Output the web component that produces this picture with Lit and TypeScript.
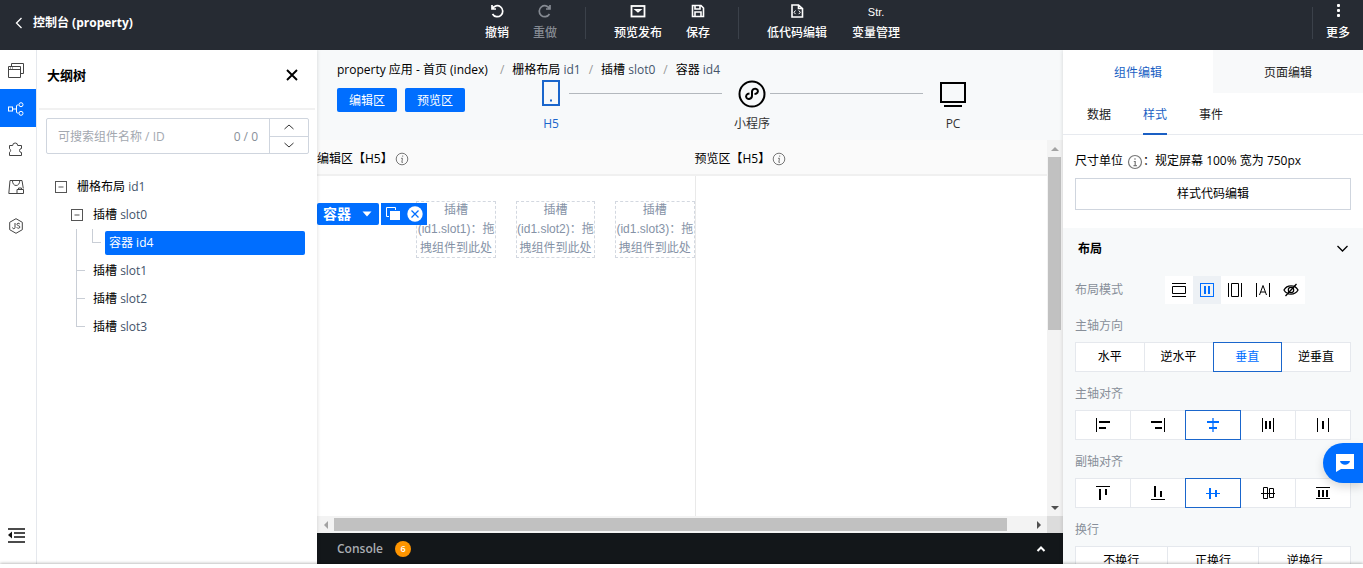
import { LitElement, html, css, svg, nothing } from "lit";
import { customElement, property, state } from "lit/decorators.js";
import { classMap } from "lit/directives/class-map.js";

const icons: Record<string, unknown> = {
  back: svg`<path d="M10.500 3 5.500 8l5 5" stroke-width="1.300" />`,
  undo: svg`<path d="M3 2v4h4M3.300 5.800A5.500 5.500 0 1 1 3.500 11" stroke-width="1.700" />`,
  redo: svg`<path d="M13 2v4H9M12.700 5.800A5.500 5.500 0 1 0 12.500 11" stroke-width="1.700" />`,
  publish: svg`<rect x="1.500" y="3" width="13" height="10.500" stroke-width="1.800" /><path d="m5.500 6.800 2.500 2 2.500-2z" stroke-width="1.400" />`,
  save: svg`<path d="M2.500 2.500h8.500l2.500 2.500v8.500h-11zM5 2.500V6h5V2.500M5 13.500V9h6v4.500" stroke-width="1.600" />`,
  code: svg`<path d="M3 2h6.500L13.500 5.500V14H3zM9.500 2v3.500h4" stroke-width="1.600" /><path d="M6.500 7.500 5 9.300l1.500 1.800M9.800 7.500l1.500 1.800-1.500 1.800" />`,
  more: svg`<g fill="currentColor" stroke="none"><rect x="7" y="1" width="3" height="3" rx="1" /><rect x="7" y="6" width="3" height="3" rx="1" /><rect x="7" y="11" width="3" height="3" rx="1" /></g>`,
  windows: svg`<path d="M.5 4.500h12v11H.5zM.5 7.500h12M3.500 4.500v-3h12v10h-3" /><path d="M2 6h4" stroke-dasharray="1 1" />`,
  tree: svg`<rect x=".5" y="6" width="4" height="4" /><path d="M4.500 8h4M10.500 4H9.500a1 1 0 0 0-1 1v6a1 1 0 0 0 1 1h1" /><circle cx="13" cy="3.700" r="2" /><circle cx="13" cy="12.300" r="2" />`,
  plugin: svg`<path d="M1.500 5.500h3.200a2.500 2.500 0 1 1 5 0h3.800v3a2 2 0 1 0 0 4v3h-12v-3.200c1.500-.8 1.500-2.800 0-3.600z" />`,
  store: svg`<path d="M9 14.500H.8L2 1.500h12l1.300 8M4.500 2c0 2.500 1.500 4.500 3.600 4.500S11.700 4.500 11.700 2" /><path d="M9 10.500h6.500v4H9zM10.500 10.500v-1.500h3v1.500" />`,
  js: svg`<path d="M8 .7 14.300 4.300v7.400L8 15.300 1.700 11.700V4.300z" /><path d="M7 5v4.500c0 1.800-2.500 1.500-2.500 0M11.800 6c-.8-1.300-3-.9-2.800.6.2 1.300 2.900.9 2.900 2.400 0 1.600-2.600 1.700-3.200.3" />`,
  outdent: svg`<path d="M0 2h17M6 6h11M6 10h11M0 15h17" stroke-width="1.700" /><path d="M4 4.500v7L0 8z" fill="currentColor" stroke="none" />`,
  close: svg`<path d="m3 3 10 10M13 3 3 13" stroke-width="1.900" />`,
  up: svg`<path d="m3.500 10 4.500-4 4.500 4" />`,
  down: svg`<path d="m3.500 6 4.500 4 4.500-4" />`,
  chevron: svg`<path d="m3.500 5 5 5 5-5" stroke-width="1.300" />`,
  minus: svg`<rect x="2.500" y="2.500" width="11" height="11" /><path d="M5.500 8h5" />`,
  info: svg`<circle cx="8" cy="8" r="5.800" /><path d="M8.700 4.500v1.200M7 7.300h1.500l-.7 4h1.200" />`,
  infoBold: svg`<circle cx="8" cy="8" r="6.500" stroke-width="1.200" /><path d="M8 4.300v1.500M6.800 7.500h1.400V12M6.500 11.700h3.400" stroke-width="1.200" />`,
  caret: svg`<path d="M3.500 5.500h9L8 10.500z" fill="currentColor" stroke="none" />`,
  copy: svg`<path d="M4 10.500H1.500v-9h9V4" /><rect x="5" y="5" width="10" height="9" fill="currentColor" stroke="none" />`,
  remove: svg`<circle cx="8" cy="8" r="7.700" fill="#fff" stroke="none" /><path d="m4.500 4.500 7 7M11.500 4.500l-7 7" stroke="#006eff" stroke-width="1.300" />`,
  phone: svg`<rect x="6" y="1" width="16" height="24" stroke-width="2" /><path d="M13 20.500h2" stroke-width="2" />`,
  mini: svg`<circle cx="14" cy="14" r="12.500" stroke-width="2" /><path d="M11.500 13.500c-2.800.3-4.200 2.300-3 4.300 1.400 2.100 5.500 1.300 5.500-2v-4c0-3 4-4.100 5.500-2 1.200 2-.3 4-3 4.300" stroke-width="2" />`,
  pc: svg`<rect x="2" y="3" width="24" height="19" stroke-width="2" /><path d="M5 26h18" stroke-width="2" />`,
  block: svg`<path d="M1 1.500h14M1 14.500h14M1.500 4.500h13v7h-13z" />`,
  flex: svg`<rect x="1.500" y="1.500" width="13" height="13" /><path d="M6 4v8M10 4v8" stroke-width="2" />`,
  inlineBlock: svg`<path d="M1.500 1v14M14.500 1v14M4.500 1.500h7v13h-7z" />`,
  inline: svg`<path d="M1.500 1v14M14.500 1v14M4.500 13 8 3.500 11.500 13M5.700 10h4.600" />`,
  hidden: svg`<path d="M1 8c3-5.500 11-5.500 14 0-3 5.500-11 5.500-14 0zM13.500 2l-11 12" stroke-width="1.300" /><circle cx="8" cy="8" r="2.700" stroke-width="1.200" />`,
  mStart: svg`<path d="M1.500 1v14" /><path d="M4 5h11M4 11h7" stroke-width="2" />`,
  mEnd: svg`<path d="M14.500 1v14" /><path d="M1 5h11M5 11h7" stroke-width="2" />`,
  mCenter: svg`<path d="M8 1v14" stroke-width="1.300" /><path d="M2 5h12M4 11h8" stroke-width="2" />`,
  mBetween: svg`<path d="M2.500 1v14M13.500 1v14" /><path d="M6 4v8M10 4v8" stroke-width="2" />`,
  mAround: svg`<path d="M2.500 1v14M13.500 1v14" /><path d="M8 4v8" stroke-width="2" />`,
  cStart: svg`<path d="M1 1.500h14" /><path d="M5 4v11M11 4v6" stroke-width="2" />`,
  cEnd: svg`<path d="M1 14.500h14" /><path d="M5 1v11M11 6v6" stroke-width="2" />`,
  cCenter: svg`<path d="M1 8.500h14" /><path d="M5 3v11M11 5v7" stroke-width="2" />`,
  cBase: svg`<path d="M1 8.500h14M3.500 2.500h4v11h-4zM9.500 3.500h4v9h-4z" />`,
  cStretch: svg`<path d="M1 2.500h14M1 13.500h14" /><path d="M4 5v7M8 5v7M12 5v7" stroke-width="2" />`,
  chat: svg`<path d="M0 0h18v15H5l-5 3z" fill="#fff" stroke="none" /><path d="M4 7h10c-1 5-9 5-10 0z" fill="#006eff" stroke="none" />`,
};

const icon = (name: string, size = 16, box = 16) => html`<svg
  width=${size} height=${size} viewBox="0 0 ${box} ${box}" fill="none"
  stroke="currentColor" aria-hidden="true">${icons[name]}</svg>`;

const base = css`
  *, *::before, *::after { box-sizing: border-box; }
  :host { font-family: "Open Sans", "Noto Sans CJK SC", sans-serif; font-size: 12px; line-height: 16px; color: #000; }
  button, input { font: inherit; color: inherit; border: 0; padding: 0; margin: 0; background: none; border-radius: 0; }
  button { cursor: pointer; white-space: nowrap; }
  a { color: inherit; text-decoration: none; }
  ul, ol { list-style: none; margin: 0; padding: 0; }
  h1, h2, h3 { margin: 0; font: inherit; }
  svg { display: block; flex: none; }
`;

@customElement("top-bar")
class TopBar extends LitElement {
  static styles = [base, css`
    :host { display: block; flex: none; background: #262b33; color: #fff; }
    .bar { display: flex; height: 50px; align-items: flex-start; }
    .title { display: flex; flex: 0 0 473px; align-items: center; gap: 6px; height: 46px; padding-left: 11px; font-weight: 700; }
    .tools { display: flex; flex: 1; }
    .tool { display: flex; flex-direction: column; align-items: center; gap: 6px; padding: 3px 12px 0; font-weight: 500; }
    .tool:last-child { padding: 3px 13px 0; }
    .dim { color: #858a92; }
    .str { font: 11px/18px "Liberation Sans", sans-serif; height: 16px; }
    .sep { width: 1px; height: 32px; margin: 7px 16px 0; background: #3b414a; }
    .sep.end { margin-right: 0; }
  `];
  private tool(name: string, label: string, dim = false) {
    return html`<button class=${classMap({ tool: true, dim })} ?disabled=${dim}>
      ${name === "str" ? html`<span class="str">Str.</span>` : icon(name)}<span>${label}</span></button>`;
  }
  render() {
    return html`<header class="bar">
      <a class="title" href="#">${icon("back")}<span>控制台 (property)</span></a>
      <nav class="tools">
        ${this.tool("undo", "撤销")}${this.tool("redo", "重做", true)}
        <span class="sep"></span>
        ${this.tool("publish", "预览发布")}${this.tool("save", "保存")}
        <span class="sep"></span>
        ${this.tool("code", "低代码编辑")}${this.tool("str", "变量管理")}
      </nav>
      <span class="sep end"></span>
      ${this.tool("more", "更多")}
    </header>`;
  }
}

@customElement("side-rail")
class SideRail extends LitElement {
  static styles = [base, css`
    :host { display: flex; flex: none; flex-direction: column; gap: 1px; width: 37px; padding: 0 0 21px; border-right: 1px solid #e5e8ed; background: #fff; color: #444; }
    .item { display: flex; height: 38px; align-items: center; padding: 2px 0 0 8px; }
    .active { background: #006eff; color: #fff; }
    .last { height: 18px; margin-top: auto; color: #111; }
  `];
  render() {
    return html`${["windows", "tree", "plugin", "store", "js"].map((n) => html`<button
        class=${classMap({ item: true, active: n === "tree" })} aria-label=${n}>${icon(n)}</button>`)}
      <button class="item last" aria-label="收起">${icon("outdent", 17, 17)}</button>`;
  }
}

@customElement("outline-panel")
class OutlinePanel extends LitElement {
  static styles = [base, css`
    :host { display: block; flex: none; width: 280px; background: #fff; }
    .head { display: flex; height: 60px; align-items: center; justify-content: space-between; margin: 0 2px; padding: 0 15px 8px 8px; border-bottom: 2px solid #f1f1f1; }
    .title { font-size: 13px; font-weight: 600; }
    .search { display: flex; height: 36px; margin: 8px 8px 0 9px; border: 1px solid #cfd5de; border-radius: 2px; }
    .box { flex: 1; min-width: 0; padding: 2px 0 0 11px; outline: 0; }
    .box::placeholder { color: #a3a8b0; opacity: 1; }
    .count { padding: 1px 11px 0; line-height: 34px; color: #888f99; }
    .steps { display: flex; flex-direction: column; width: 39px; border-left: 1px solid #cfd5de; color: #333; }
    .step { display: flex; flex: 1; align-items: center; justify-content: center; }
    .step + .step { border-top: 1px solid #cfd5de; }
    .root { margin: 19px 12px 0 16px; }
    .row { display: flex; width: 100%; height: 28px; align-items: center; gap: 8px; }
    .row svg { color: #555; }
    .id { color: #44546a; }
    .sub { margin-left: 16px; }
    .leaves { margin-left: 7px; }
    .leaf { display: flex; height: 28px; align-items: center; }
    .leaf::before { content: ""; align-self: flex-start; width: 9px; height: 14px; margin-right: 8px; border: solid #c9ced6; border-width: 0 0 1px 1px; }
    .leaf.mid { border-left: 1px solid #c9ced6; }
    .leaf.mid::before { width: 8px; border-left-width: 0; }
    .leaf.nest { padding-left: 15px; }
    .leaf.nest::before { width: 9px; margin-right: 4px; border-left-width: 1px; }
    .picked { flex: 1; height: 24px; padding: 0 4px; border-radius: 2px; background: #006eff; color: #fff; text-align: left; }
  `];
  render() {
    return html`<div class="head"><h2 class="title">大纲树</h2><button aria-label="关闭">${icon("close")}</button></div>
      <div class="search">
        <input class="box" aria-label="搜索" placeholder="可搜索组件名称 / ID" />
        <span class="count">0 / 0</span>
        <div class="steps">
          <button class="step" aria-label="上一个">${icon("up")}</button>
          <button class="step" aria-label="下一个">${icon("down")}</button>
        </div>
      </div>
      <ul class="root">
        <li>
          <button class="row">${icon("minus")}<span>栅格布局 <span class="id">id1</span></span></button>
          <ul class="sub"><li>
            <button class="row">${icon("minus")}<span>插槽 <span class="id">slot0</span></span></button>
            <ul class="leaves">
              <li class="leaf mid nest"><button class="picked">容器 id4</button></li>
              ${["slot1", "slot2", "slot3"].map((s, i) => html`<li class=${classMap({ leaf: true, mid: i < 2 })}>
                <button>插槽 <span class="id">${s}</span></button></li>`)}
            </ul>
          </li></ul>
        </li>
      </ul>`;
  }
}

@customElement("work-area")
class WorkArea extends LitElement {
  static styles = [base, css`
    :host { display: flex; flex: 1; min-width: 0; flex-direction: column; background: #f7f9fa; }
    .top { flex: none; height: 90px; padding: 10px 20px 0; }
    .crumbs { display: flex; height: 20px; align-items: center; white-space: nowrap; }
    .crumbs li:first-child { padding-right: 4px; }
    .crumbs li + li::before { content: "/"; margin: 0 8px; color: #999; }
    .id { color: #44546a; }
    .controls { display: flex; align-items: flex-start; }
    .btns { display: flex; gap: 8px; padding-top: 8px; }
    .btn { width: 60px; height: 24px; padding-top: 2px; border-radius: 2px; background: #006eff; color: #fff; }
    .steps { display: flex; flex: 1; margin: 0 72px 0 68px; }
    .dev { display: flex; flex: 0 0 36px; flex-direction: column; align-items: center; gap: 8px; color: #333; }
    .dev svg { color: #000; }
    .on, .on svg { color: #1a66cc; }
    .line { flex: 1; height: 1px; margin: 13px 12px 0 0; background: #b3b8bd; }
    .view { display: grid; flex: 1; min-height: 0; grid-template-columns: minmax(0, 1fr) 16px; grid-template-rows: minmax(0, 1fr) 17px; }
    .canvas { display: grid; grid-template-columns: 377fr 352fr; grid-template-rows: 36px 1fr; background: #fff; }
    .cap { display: flex; align-items: center; gap: 1px; padding-top: 3px; border-bottom: 2px solid #f0f0f0; background: #fafafa; }
    .cap svg { color: #777; }
    .edit { position: relative; }
    .show { border-left: 1px solid #e9e9e9; }
    .slots { display: grid; grid-template-columns: repeat(4, 1fr); column-gap: 20px; padding-top: 25px; }
    .slot { outline: 1px dashed #d3d8e0; outline-offset: -1px; color: #8592a6; font: 12px/19px "Liberation Sans", "Noto Sans CJK SC", sans-serif; text-align: center; white-space: nowrap; }
    .slot span { display: block; }
    .float { position: absolute; top: 27px; left: 0; display: flex; gap: 2px; color: #fff; }
    .tag, .acts { display: flex; height: 22px; align-items: center; background: #006eff; }
    .tag { width: 62px; justify-content: space-between; padding: 0 4px 0 6px; border-radius: 2px; font-size: 14px; font-weight: 700; }
    .acts { width: 46px; justify-content: center; gap: 6px; }
    .vbar, .hbar { display: flex; align-items: center; background: #f3f3f3; color: #a3a3a3; }
    .vbar { flex-direction: column; padding: 0 2px 0 1px; }
    .hbar { padding: 2px 0 2px; }
    .arrow { display: flex; flex: none; width: 17px; height: 17px; align-items: center; justify-content: center; }
    .dark { color: #505050; }
    .vthumb { width: 100%; flex: 172; background: #c1c1c1; }
    .vrest { flex: 169; }
    .hthumb { height: 100%; flex: 672; background: #c1c1c1; }
    .hrest { flex: 23; }
    .corner { background: #dcdcdc; }
    .console { display: flex; flex: none; height: 31px; align-items: center; gap: 12px; padding: 0 15px 0 20px; background: #13171a; color: #a9adb2; font-weight: 600; }
    .num { width: 16px; height: 16px; border-radius: 8px; background: #ff9500; color: #fff; font-size: 9px; text-align: center; }
    .fold { margin-left: auto; color: #fff; }
  `];
  private arrow(points: string, dark: boolean) {
    return html`<span class=${classMap({ arrow: true, dark })}><svg width="8" height="8" fill="currentColor"><path d=${points} /></svg></span>`;
  }
  render() {
    return html`<div class="top">
        <ol class="crumbs">
          <li><a href="#">property 应用 - 首页 (index)</a></li>
          <li><a href="#">栅格布局 <span class="id">id1</span></a></li>
          <li><a href="#">插槽 <span class="id">slot0</span></a></li>
          <li><a href="#">容器 <span class="id">id4</span></a></li>
        </ol>
        <div class="controls">
          <div class="btns"><button class="btn">编辑区</button><button class="btn">预览区</button></div>
          <div class="steps">
            <button class="dev on">${icon("phone", 28, 28)}<span>H5</span></button><span class="line"></span>
            <button class="dev">${icon("mini", 28, 28)}<span>小程序</span></button><span class="line"></span>
            <button class="dev">${icon("pc", 28, 28)}<span>PC</span></button>
          </div>
        </div>
      </div>
      <div class="view">
        <div class="canvas">
          <div class="cap"><span>编辑区【H5】</span>${icon("info")}</div>
          <div class="cap"><span>预览区【H5】</span>${icon("info")}</div>
          <div class="edit">
            <div class="slots"><div></div>
              ${[1, 2, 3].map((n) => html`<div class="slot"><span>插槽</span><span>(id1.slot${n})：拖</span><span>拽组件到此处</span></div>`)}
            </div>
            <div class="float">
              <button class="tag">容器 ${icon("caret")}</button>
              <div class="acts"><button aria-label="复制">${icon("copy")}</button><button aria-label="删除">${icon("remove")}</button></div>
            </div>
          </div>
          <div class="show"></div>
        </div>
        <div class="vbar">${this.arrow("M0 6h8L4 2z", false)}<span class="vthumb"></span><span class="vrest"></span>${this.arrow("M0 2h8L4 6z", true)}</div>
        <div class="hbar">${this.arrow("M6 0v8L2 4z", false)}<span class="hthumb"></span><span class="hrest"></span>${this.arrow("M2 0v8l4-4z", true)}</div>
        <div class="corner"></div>
      </div>
      <div class="console"><span>Console</span><span class="num">6</span><button class="fold" aria-label="展开">
        <svg width="14" height="14" fill="none" stroke="currentColor" stroke-width="2"><path d="m3.500 9 3.500-3.500L10.500 9" /></svg></button></div>`;
  }
}

@customElement("choice-row")
class ChoiceRow extends LitElement {
  @property({ attribute: false }) options: string[] = [];
  @property({ type: Number }) picked = -1;
  @property({ type: Boolean }) glyphs = false;
  @property() label = "";
  static styles = [base, css`
    :host { display: block; }
    .label { margin: 14px 0 8px; color: #888f99; }
    .row { display: flex; border: 1px solid #e5e8ed; background: #fff; }
    .opt { display: flex; flex: 1 1 0; height: 28px; align-items: center; justify-content: center; }
    .opt + .opt { border-left: 1px solid #e5e8ed; }
    .opt.on { position: relative; z-index: 1; height: 30px; margin: -1px -1px -1px 0; border: 1px solid #1a66cc; color: #006eff; }
  `];
  render() {
    return html`<h3 class="label">${this.label}</h3><div class="row" role="group" aria-label=${this.label}>
      ${this.options.map((o, i) => html`<button class=${classMap({ opt: true, on: i === this.picked })}
        aria-pressed=${i === this.picked} aria-label=${this.glyphs ? o : nothing}
        @click=${() => (this.picked = i)}>${this.glyphs ? icon(o) : o}</button>`)}</div>`;
  }
}

@customElement("style-panel")
class StylePanel extends LitElement {
  @state() private mode = "flex";
  static styles = [base, css`
    :host { display: flex; flex: 0 0 300px; flex-direction: column; overflow: hidden; background: #fff; }
    .main { display: flex; flex: none; }
    .big { flex: 1; height: 43px; padding-top: 2px; color: #222; background: #f8f9fa; }
    .big.on { background: #fff; color: #1a5fc4; }
    .tabs { display: flex; flex: none; gap: 32px; padding-left: 24px; border-bottom: 1px solid #e7eaef; }
    .tab { height: 42px; margin-bottom: -1px; padding-top: 3px; border-bottom: 2px solid transparent; color: #222; }
    .tab.on { border-color: #1a5fc4; color: #1a5fc4; }
    .unit { display: flex; flex: none; align-items: center; height: 17px; margin: 17px 12px 9px; }
    .unit svg { margin: 2px 0 0 4px; color: #777; }
    .code { flex: none; height: 32px; margin: 0 12px 18px; border: 1px solid #cfd5de; }
    .group { flex: 1 0 auto; padding: 0 12px; background: #f7f9fa; }
    .fold { display: flex; width: 100%; height: 42px; align-items: center; justify-content: space-between; padding: 0 1px 0 3px; font-weight: 600; }
    .modes { display: flex; align-items: center; margin: 6px 0 0; }
    .name { width: 90px; color: #888f99; }
    .mode { display: flex; width: 28px; height: 28px; align-items: center; justify-content: center; background: #fff; }
    .mode.on { background: #edf1f5; color: #006eff; }
  `];
  render() {
    return html`<div class="main"><button class="big on">组件编辑</button><button class="big">页面编辑</button></div>
      <div class="tabs"><button class="tab">数据</button><button class="tab on">样式</button><button class="tab">事件</button></div>
      <div class="unit">尺寸单位${icon("infoBold")}：<span>规定屏幕 100% 宽为 750px</span></div>
      <button class="code">样式代码编辑</button>
      <section class="group">
        <button class="fold">布局${icon("chevron")}</button>
        <div class="modes"><span class="name">布局模式</span>
          ${["block", "flex", "inlineBlock", "inline", "hidden"].map((m) => html`<button aria-label=${m}
            class=${classMap({ mode: true, on: m === this.mode })} @click=${() => (this.mode = m)}>${icon(m)}</button>`)}
        </div>
        <choice-row label="主轴方向" .options=${["水平", "逆水平", "垂直", "逆垂直"]} picked="2"></choice-row>
        <choice-row label="主轴对齐" glyphs .options=${["mStart", "mEnd", "mCenter", "mBetween", "mAround"]} picked="2"></choice-row>
        <choice-row label="副轴对齐" glyphs .options=${["cStart", "cEnd", "cCenter", "cBase", "cStretch"]} picked="2"></choice-row>
        <choice-row label="换行" .options=${["不换行", "正换行", "逆换行"]}></choice-row>
      </section>`;
  }
}

@customElement("app-root")
class AppRoot extends LitElement {
  static styles = [base, css`
    :host { position: relative; display: flex; height: 100vh; flex-direction: column; overflow: hidden; background: #fff; }
    .body { display: flex; flex: 1; min-height: 0; overflow: hidden; }
    .foot { position: relative; z-index: 2; flex: none; height: 4px; background: #fff; box-shadow: 0 -1px 3px rgba(0, 0, 0, .25); }
    .side { display: flex; z-index: 1; box-shadow: 0 0 4px rgba(0, 0, 0, .15); }
    .chat { position: absolute; z-index: 2; right: 0; bottom: 85px; display: flex; width: 40px; height: 40px; align-items: center; padding-left: 13px; border-radius: 20px 0 0 20px; background: #006eff; box-shadow: 0 4px 10px rgba(0, 0, 0, .15); }
  `];
  render() {
    return html`<top-bar></top-bar>
      <main class="body">
        <div class="side"><side-rail></side-rail><outline-panel></outline-panel></div>
        <work-area></work-area>
        <div class="side"><style-panel></style-panel></div>
      </main>
      <div class="foot"></div>
      <button class="chat" aria-label="在线咨询">${icon("chat", 18, 18)}</button>`;
  }
}
